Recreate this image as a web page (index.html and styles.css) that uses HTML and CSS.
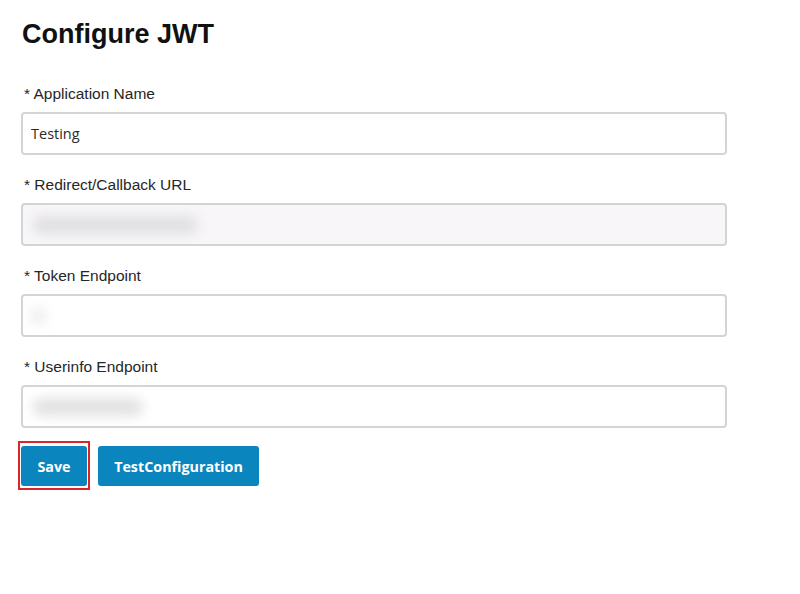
FILE: index.html
```html
<!DOCTYPE html>
<html lang="en">
<head>
<meta charset="utf-8">
<title>Configure JWT</title>
<link rel="stylesheet" href="styles.css">
</head>
<body>
<main class="page">
  <h1 class="title">Configure JWT</h1>
  <form class="form">
    <div class="field">
      <label class="label">* Application Name</label>
      <div class="input"><span class="value">Testing</span></div>
    </div>
    <div class="field">
      <label class="label">* Redirect/Callback URL</label>
      <div class="input tinted"><span class="blur blur-long"></span></div>
    </div>
    <div class="field">
      <label class="label">* Token Endpoint</label>
      <div class="input"><span class="blur blur-short"></span></div>
    </div>
    <div class="field field-last">
      <label class="label">* Userinfo Endpoint</label>
      <div class="input"><span class="blur blur-mid"></span></div>
    </div>
    <div class="actions">
      <span class="save-frame"><button type="button" class="btn btn-save">Save</button></span>
      <button type="button" class="btn btn-test">TestConfiguration</button>
    </div>
  </form>
</main>
</body>
</html>
```

FILE: styles.css
```css
html, body {
  margin: 0;
  padding: 0;
  background: #ffffff;
}

.page {
  padding: 19px 0 0 21px;
  width: 706px;
}

.title {
  margin: 0 0 35px 1px;
  font-family: "Liberation Sans", Arial, sans-serif;
  font-weight: 700;
  font-size: 27px;
  line-height: 31px;
  color: #111111;
}

.form {
  display: flex;
  flex-direction: column;
}

.field {
  display: flex;
  flex-direction: column;
  margin-bottom: 21px;
}

.field-last {
  margin-bottom: 13px;
}

.label {
  font-family: "Liberation Sans", Arial, sans-serif;
  font-size: 15.5px;
  line-height: 18px;
  color: #262626;
  margin: 0 0 9px 3px;
}

.input {
  box-sizing: border-box;
  height: 43px;
  border: 2px solid #d4d4d4;
  border-radius: 4px;
  background: #ffffff;
  display: flex;
  align-items: center;
  padding: 0 8px;
  overflow: hidden;
}

.input.tinted {
  background: #f8f6f9;
}

.value {
  font-family: "Open Sans", sans-serif;
  font-size: 14.5px;
  color: #2a2a2a;
}

.blur {
  display: block;
  height: 18px;
  background: #d6d6d8;
  border-radius: 8px;
  filter: blur(6px);
  opacity: 0.7;
}

.blur-long { width: 165px; margin-left: 2px; }
.blur-short { width: 14px; margin-left: 0; opacity: 0.45; }
.blur-mid { width: 110px; margin-left: 2px; }

.actions {
  display: flex;
  align-items: flex-start;
}

.save-frame {
  display: flex;
  border: 2px solid #d9262c;
  padding: 3px 1px 2px 1px;
  margin-left: -3px;
  margin-right: 8px;
}

.btn {
  height: 40px;
  padding: 0 17px;
  border: none;
  border-radius: 3px;
  background: #0b85bd;
  color: #ffffff;
  font-family: "Open Sans", sans-serif;
  font-weight: 700;
  font-size: 14.3px;
  cursor: pointer;
}

.btn-save {
  width: 66px;
  padding: 0;
}

.btn-test {
  margin-top: 5px;
  width: 161px;
  padding: 0;
}
```
